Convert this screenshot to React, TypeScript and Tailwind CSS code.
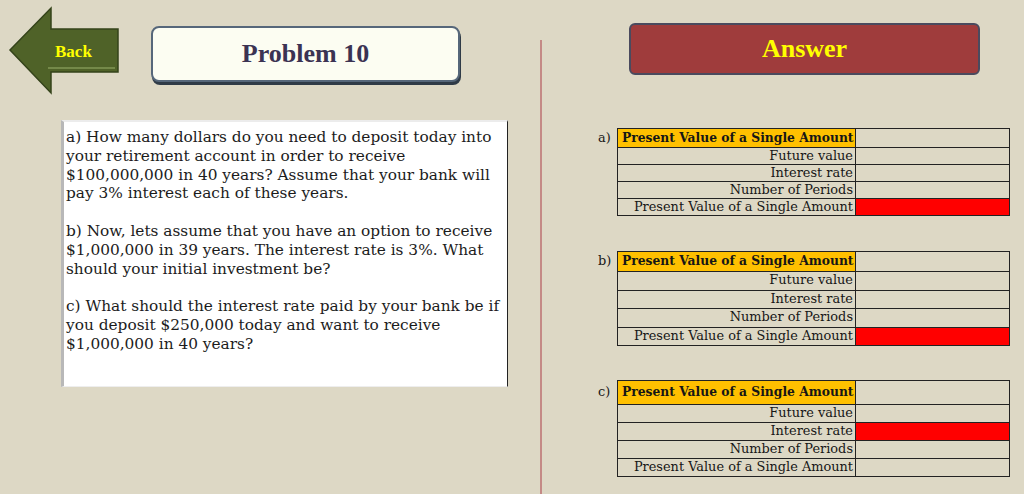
import React from 'react';

const SERIF = "font-['DejaVu_Serif','Liberation_Serif',serif]";

type Row = { label: string; red?: boolean };

const rowsFor = (redIndex: number): Row[] => [
    { label: 'Future value', red: redIndex === 0 },
    { label: 'Interest rate', red: redIndex === 1 },
    { label: 'Number of Periods', red: redIndex === 2 },
    { label: 'Present Value of a Single Amount', red: redIndex === 3 },
];

const BackArrow: React.FC = () => (
    <div className="relative w-[114px] h-[90px] shrink-0">
        <svg width="114" height="90" viewBox="0 0 114 90" className="absolute inset-0">
            <polygon
                points="2,44 43,2 43,23 110,23 110,66 43,66 43,87"
                fill="#4f6228"
                stroke="#34431a"
                strokeWidth="1.5"
                strokeLinejoin="miter"
            />
            <line x1="40" y1="62" x2="107" y2="62" stroke="#9bb06a" strokeWidth="1" />
        </svg>
        <span className="absolute left-[47px] top-[36px] text-[17px] leading-[20px] font-bold text-[#ffff00] font-['Liberation_Serif',serif]">
            Back
        </span>
    </div>
);

const AmountTable: React.FC<{ letter: string; header: number; row: number; redIndex: number }> = ({ letter, header, row, redIndex }) => (
    <div className={`flex items-start ${SERIF} text-[12.9px] text-[#161616]`}>
        <div className="w-[19px] shrink-0 flex items-center" style={{ height: header }}>
            {letter}
        </div>
        <table className="border-collapse table-fixed w-[393px]">
            <colgroup>
                <col className="w-[238px]" />
                <col />
            </colgroup>
            <tbody>
                <tr style={{ height: header }}>
                    <td className="border border-[#222] bg-[#ffc000] font-bold text-[12.3px] pl-[4px] pr-0 py-0 whitespace-nowrap overflow-hidden leading-none">
                        Present Value of a Single Amount
                    </td>
                    <td className="border border-[#222] p-0"></td>
                </tr>
                {rowsFor(redIndex).map(r => (
                    <tr key={r.label} style={{ height: row }}>
                        <td className="border border-[#222] text-right pr-[2px] py-0 whitespace-nowrap leading-none">{r.label}</td>
                        <td className={`border border-[#222] p-0 ${r.red ? 'bg-[#ff0000]' : ''}`}></td>
                    </tr>
                ))}
            </tbody>
        </table>
    </div>
);

const App: React.FC = () => {
    return (
        <div className="w-full h-[494px] overflow-hidden bg-[#ddd8c5] flex">
            {/* left side: back, title and question */}
            <div className="w-[540px] shrink-0 pt-[6px]">
                <div className="flex items-start h-[90px] pl-[8px]">
                    <BackArrow />
                    <div className="ml-[29px] mt-[20px] w-[309px] h-[56px] rounded-[8px] border-2 border-[#56677a] bg-[#fcfdf2] shadow-[1px_3px_0_#2f3b47] flex items-center justify-center">
                        <span className="text-[26px] font-bold text-[#3b3353] font-['Liberation_Serif',serif] pb-[2px]">Problem 10</span>
                    </div>
                </div>
                <div className={`ml-[61px] mt-[24px] w-[447px] h-[267px] bg-white border-l-[3px] border-l-[#b8b8b8] border-r border-r-[#222] border-t-2 border-t-[#ececec] border-b border-b-[#eeeeee] pl-[2px] pt-[6px] ${SERIF} text-[15.35px] leading-[18.8px] text-[#1c1c1c] whitespace-nowrap`}>
                    <p>
                        a) How many dollars do you need to deposit today into<br />
                        your retirement account in order to receive<br />
                        $100,000,000 in 40 years? Assume that your bank will<br />
                        pay 3% interest each of these years.
                    </p>
                    <p className="mt-[18.8px]">
                        b) Now, lets assume that you have an option to receive<br />
                        $1,000,000 in 39 years. The interest rate is 3%. What<br />
                        should your initial investment be?
                    </p>
                    <p className="mt-[18.8px]">
                        c) What should the interest rate paid by your bank be if<br />
                        you deposit $250,000 today and want to receive<br />
                        $1,000,000 in 40 years?
                    </p>
                </div>
            </div>

            <div className="w-[2px] mt-[40px] bg-[#c48a86] shrink-0" />

            {/* right side: answer tables */}
            <div className="flex-1 pt-[23px]">
                <div className="ml-[87px] w-[351px] h-[52px] rounded-[6px] border-2 border-[#4a4a5e] bg-[#9f3c3c] flex items-center justify-center">
                    <span className="text-[26px] font-bold text-[#ffff00] font-['Liberation_Serif',serif] pb-[1px]">Answer</span>
                </div>
                <div className="ml-[56px] mt-[53px]">
                    <AmountTable letter="a)" header={19} row={17} redIndex={3} />
                </div>
                <div className="ml-[56px] mt-[35px]">
                    <AmountTable letter="b)" header={20} row={18.5} redIndex={3} />
                </div>
                <div className="ml-[56px] mt-[34px]">
                    <AmountTable letter="c)" header={24} row={18} redIndex={1} />
                </div>
            </div>
        </div>
    );
};

export default App;
